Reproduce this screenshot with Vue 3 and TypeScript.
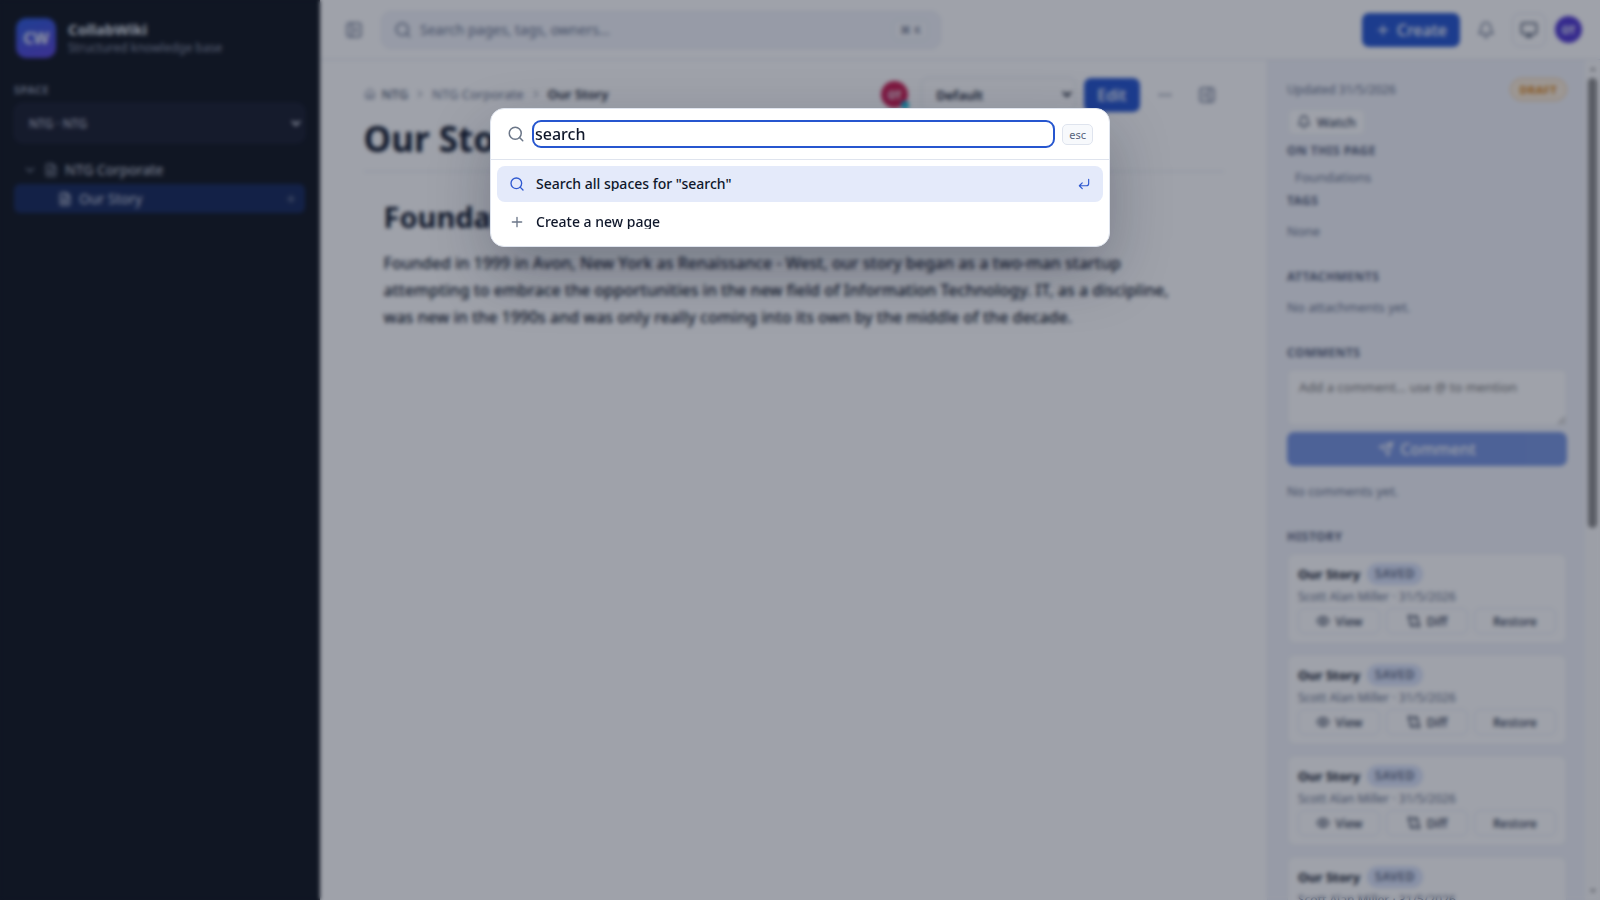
<script setup lang="ts">
import { ref } from 'vue'

const space = ref('ntg')
const view = ref('default')
const comment = ref('')
const query = ref('search')
const history = Array.from({ length: 4 }, (_, i) => ({
  id: i,
  title: 'Our Story',
  meta: 'Scott Alan Miller · 31/5/2026',
}))
</script>

<template>
  <div class="app">
    <nav class="sidebar">
      <div class="brand">
        <div class="logo">CW</div>
        <div>
          <div class="brand-name">CollabWiki</div>
          <div class="brand-sub">Structured knowledge base</div>
        </div>
      </div>
      <label class="space-label" for="space">Space</label>
      <select id="space" v-model="space" class="space-select">
        <option value="ntg">NTG · NTG</option>
      </select>
      <ul class="tree">
        <li class="row">
          <svg class="i14 chevron" viewBox="0 0 24 24"><path d="m6 9 6 6 6-6" /></svg>
          <svg class="i14 file" viewBox="0 0 24 24"><path d="M15 2H6a2 2 0 0 0-2 2v16a2 2 0 0 0 2 2h12a2 2 0 0 0 2-2V7Z M14 2v4a2 2 0 0 0 2 2h4 M10 9H8 M16 13H8 M16 17H8" /></svg>
          <a href="#corporate">NTG Corporate</a>
        </li>
        <li class="row child active">
          <svg class="i14 file" viewBox="0 0 24 24"><path d="M15 2H6a2 2 0 0 0-2 2v16a2 2 0 0 0 2 2h12a2 2 0 0 0 2-2V7Z M14 2v4a2 2 0 0 0 2 2h4 M10 9H8 M16 13H8 M16 17H8" /></svg>
          <a href="#story">Our Story</a>
          <button class="add" aria-label="Add page"><svg class="i12" viewBox="0 0 24 24"><path d="M5 12h14M12 5v14" /></svg></button>
        </li>
      </ul>
    </nav>

    <div class="workspace">
      <header class="topbar">
        <button class="icon-btn" aria-label="Toggle sidebar">
          <svg class="i18" viewBox="0 0 24 24"><rect x="3" y="3" width="18" height="18" rx="2" /><path d="M9 3v18M16 15l-3-3 3-3" /></svg>
        </button>
        <button class="search">
          <svg class="i18" viewBox="0 0 24 24"><circle cx="11" cy="11" r="8" /><path d="m21 21-4.3-4.3" /></svg>
          <span>Search pages, tags, owners...</span>
          <kbd>⌘ K</kbd>
        </button>
        <div class="top-actions">
          <button class="primary create"><svg class="i16" viewBox="0 0 24 24"><path d="M5 12h14M12 5v14" /></svg>Create</button>
          <button class="icon-btn" aria-label="Notifications">
            <svg class="i18" viewBox="0 0 24 24"><path d="M10.27 21a2 2 0 0 0 3.46 0M3.26 15.33A1 1 0 0 0 4 17h16a1 1 0 0 0 .74-1.67C19.41 13.96 18 12.5 18 8A6 6 0 0 0 6 8c0 4.5-1.41 5.96-2.74 7.33" /></svg>
          </button>
          <button class="icon-btn outlined" aria-label="Theme">
            <svg class="i18" viewBox="0 0 24 24"><rect x="2" y="3" width="20" height="14" rx="2" /><path d="M8 21h8M12 17v4" /></svg>
          </button>
          <div class="avatar violet">OT</div>
        </div>
      </header>

      <div class="body">
        <main class="page">
          <div class="page-inner">
            <div class="page-bar">
              <nav class="crumbs" aria-label="Breadcrumb">
                <svg class="i12" viewBox="0 0 24 24"><path d="M15 21v-8a1 1 0 0 0-1-1h-4a1 1 0 0 0-1 1v8 M3 10a2 2 0 0 1 .7-1.5l7-6a2 2 0 0 1 2.6 0l7 6A2 2 0 0 1 21 10v9a2 2 0 0 1-2 2H5a2 2 0 0 1-2-2z" /></svg>
                <a href="#ntg" class="root">NTG</a>
                <svg class="i12 sep" viewBox="0 0 24 24"><path d="m9 18 6-6-6-6" /></svg>
                <a href="#corporate">NTG Corporate</a>
                <svg class="i12 sep" viewBox="0 0 24 24"><path d="m9 18 6-6-6-6" /></svg>
                <strong>Our Story</strong>
              </nav>
              <div class="page-tools">
                <div class="avatar red">OT<i class="dot"></i></div>
                <select v-model="view" class="view-select" aria-label="Page width">
                  <option value="default">Default</option>
                </select>
                <button class="primary edit">Edit</button>
                <button class="icon-btn" aria-label="More"><svg class="i16" viewBox="0 0 24 24"><path d="M5 12h.01M12 12h.01M19 12h.01" stroke-width="4" /></svg></button>
                <button class="icon-btn" aria-label="Toggle details"><svg class="i18" viewBox="0 0 24 24"><rect x="3" y="3" width="18" height="18" rx="2" /><path d="M15 3v18M8 9l3 3-3 3" /></svg></button>
              </div>
            </div>
            <h1>Our Story</h1>
            <article>
              <h2>Foundations</h2>
              <p>Founded in 1999 in Avon, New York as Renaissance - West, our story began as a two-man startup attempting to embrace the opportunities in the new field of Information Technology. IT, as a discipline, was new in the 1990s and was only really coming into its own by the middle of the decade.</p>
            </article>
          </div>
        </main>

        <aside class="details">
          <div class="details-content">
            <div class="updated"><span>Updated 31/5/2026</span><span class="draft">Draft</span></div>
            <button class="watch"><svg class="i14" viewBox="0 0 24 24"><path d="M10.27 21a2 2 0 0 0 3.46 0M3.26 15.33A1 1 0 0 0 4 17h16a1 1 0 0 0 .74-1.67C19.41 13.96 18 12.5 18 8A6 6 0 0 0 6 8c0 4.5-1.41 5.96-2.74 7.33" /></svg>Watch</button>
            <section class="toc">
              <h3>On this page</h3>
              <a href="#foundations">Foundations</a>
            </section>
            <section>
              <h3>Tags</h3>
              <p>None</p>
            </section>
            <section>
              <h3>Attachments</h3>
              <p>No attachments yet.</p>
            </section>
            <section>
              <h3>Comments</h3>
              <textarea v-model="comment" aria-label="Comment" placeholder="Add a comment... use @ to mention"></textarea>
              <button class="primary send" disabled><svg class="i16" viewBox="0 0 24 24"><path d="m22 2-7 20-4-9-9-4ZM22 2 11 13" /></svg>Comment</button>
              <p class="after">No comments yet.</p>
            </section>
            <section>
              <h3>History</h3>
              <div class="cards">
                <div v-for="h in history" :key="h.id" class="card">
                  <div class="card-title"><strong>{{ h.title }}</strong><span class="saved">Saved</span></div>
                  <div class="card-meta">{{ h.meta }}</div>
                  <div class="card-actions">
                    <button><svg class="i14" viewBox="0 0 24 24"><path d="M2 12s3.5-7 10-7 10 7 10 7-3.5 7-10 7S2 12 2 12Z" /><circle cx="12" cy="12" r="3" /></svg>View</button>
                    <button><svg class="i14" viewBox="0 0 24 24"><circle cx="5" cy="5" r="3" /><circle cx="19" cy="19" r="3" /><path d="M12 5h5a2 2 0 0 1 2 2v9M15 8l-3-3 3-3M12 19H7a2 2 0 0 1-2-2V8M9 16l3 3-3 3" /></svg>Diff</button>
                    <button>Restore</button>
                  </div>
                </div>
              </div>
            </section>
          </div>
          <div class="scrollbar" aria-hidden="true">
            <svg viewBox="0 0 10 6"><path d="M1 5 5 1l4 4Z" /></svg>
            <div class="track"><div class="thumb"></div></div>
            <svg viewBox="0 0 10 6"><path d="M1 1l4 4 4-4Z" /></svg>
          </div>
        </aside>
      </div>
    </div>

    <div class="backdrop">
      <div class="palette" role="dialog" aria-label="Command palette">
        <div class="palette-head">
          <svg class="i18" viewBox="0 0 24 24"><circle cx="11" cy="11" r="8" /><path d="m21 21-4.3-4.3" /></svg>
          <input v-model="query" type="text" aria-label="Search" />
          <kbd>esc</kbd>
        </div>
        <div class="results">
          <button class="result selected">
            <svg class="i16" viewBox="0 0 24 24"><circle cx="11" cy="11" r="8" /><path d="m21 21-4.3-4.3" /></svg>
            <span>Search all spaces for "{{ query }}"</span>
            <svg class="i14" viewBox="0 0 24 24"><path d="M20 4v7a4 4 0 0 1-4 4H4M9 10l-5 5 5 5" /></svg>
          </button>
          <button class="result">
            <svg class="i16" viewBox="0 0 24 24"><path d="M5 12h14M12 5v14" /></svg>
            <span>Create a new page</span>
          </button>
        </div>
      </div>
    </div>
  </div>
</template>

<style>
body { overflow: hidden; }
</style>

<style scoped>
.app, .app * { box-sizing: border-box; }
.app {
  display: flex;
  height: 100vh;
  background: #fff;
  color: #0f172a;
  font-family: "Noto Sans", "Open Sans", sans-serif;
  font-size: 14px;
}
button, select, textarea, input, kbd { font-family: inherit; }
button { display: flex; align-items: center; justify-content: center; padding: 0; border: 0; background: none; color: inherit; }
a { color: inherit; text-decoration: none; }
h1, h2, h3, p, ul { margin: 0; padding: 0; }
svg { flex: none; fill: none; stroke: currentColor; stroke-width: 2; stroke-linecap: round; stroke-linejoin: round; }
.i12 { width: 12px; height: 12px; }
.i14 { width: 14px; height: 14px; }
.i16 { width: 16px; height: 16px; }
.i18 { width: 18px; height: 18px; }

.sidebar { flex: none; width: 320px; padding: 18px 15px 18px 14px; background: #11161f; color: #c5cbd8; }
.brand { display: flex; align-items: center; gap: 12px; padding-left: 2px; }
.logo { display: grid; place-items: center; width: 40px; height: 40px; border-radius: 10px; background: linear-gradient(160deg, #2b5ad8, #5b43d6); color: #e8ecf5; font-size: 16px; font-weight: 700; }
.brand-name { color: #e2e8f0; font-size: 15px; font-weight: 700; line-height: 20px; }
.brand-sub { color: #8b93a7; font-size: 12px; line-height: 18px; }
.space-label { display: block; margin: 23px 0 4px; color: #8b93a7; font-size: 11px; font-weight: 700; line-height: 18px; letter-spacing: 0.04em; text-transform: uppercase; }
.space-select { width: 100%; height: 40px; padding: 0 10px; border: 1px solid #20263a; border-radius: 8px; background: #1a1e2e; color: #d5dae6; font-size: 12px; }
.tree { display: flex; flex-direction: column; margin-top: 12px; list-style: none; }
.row { display: flex; align-items: center; gap: 7px; height: 29px; padding: 0 8px 0 9px; border-radius: 6px; color: #d0d5e0; }
.chevron { color: #8b93a7; }
.row .file { color: #9aa2b5; }
.child { padding-left: 44px; }
.active { background: #17295a; }
.row.active .file { color: #e2e6ef; }
.add { margin-left: auto; color: #8b93a7; }

.workspace { display: flex; flex: 1; flex-direction: column; min-width: 0; }
.topbar { display: flex; flex: none; align-items: center; height: 60px; padding: 0 18px 0 17px; border-bottom: 1px solid #e2e6ef; }
.icon-btn { width: 34px; height: 34px; border-radius: 8px; color: #64708a; }
.outlined { border: 1px solid #e2e6ef; color: #3b475e; }
.search { width: 560px; height: 38px; margin-left: 10px; padding: 0 12px; gap: 8px; justify-content: flex-start; border: 1px solid #e7ebf4; border-radius: 10px; background: #f2f4fa; color: #64708a; font-size: 14px; }
kbd { border: 1px solid #dfe4ee; border-radius: 5px; background: #f7f9fc; color: #56617a; }
.search kbd { margin-left: auto; padding: 0 6px; font-size: 11px; line-height: 18px; }
.top-actions { display: flex; align-items: center; gap: 9px; margin-left: auto; }
.primary { height: 34px; gap: 6px; border-radius: 7px; background: #2656cf; color: #fff; font-size: 16px; font-weight: 500; }
.create { padding: 0 13px; }
.avatar { position: relative; display: grid; place-items: center; width: 27px; height: 27px; border-radius: 50%; color: #f1f5f9; font-size: 10px; font-weight: 700; }
.violet { background: #5038d0; }
.red { background: #c91c50; }
.dot { position: absolute; right: -1px; bottom: -1px; width: 8px; height: 8px; border-radius: 50%; background: #17b5d6; }

.body { display: flex; flex: 1; min-height: 0; }
.page { flex: 1; min-width: 0; padding: 17px 20px; }
.page-inner { max-width: 860px; margin: 0 auto; }
.page-bar { display: flex; align-items: center; justify-content: space-between; height: 35px; }
.crumbs { display: flex; align-items: center; gap: 6px; padding-bottom: 2px; color: #64708a; font-size: 13px; }
.crumbs .root { font-weight: 500; color: #4a566e; }
.crumbs .sep { color: #4a566e; }
.crumbs strong { color: #0f172a; font-weight: 600; }
.page-tools { display: flex; align-items: center; gap: 8px; }
.page-tools .red { margin-right: 5px; }
.view-select { width: 155px; height: 35px; padding: 0 10px; border: 1px solid #e2e6ef; border-radius: 8px; background: #fff; color: #0f172a; font-size: 13px; font-weight: 600; }
.edit { padding: 0 13px; }
h1 { height: 60px; border-bottom: 1px solid #e2e6ef; font-size: 35px; line-height: 54px; }
article { padding: 24px 20px; }
h2 { font-size: 29px; line-height: 42px; }
article p { max-width: 800px; margin-top: 12px; font-size: 16px; font-weight: 500; line-height: 27px; }

.details { display: flex; flex: none; width: 333px; overflow: hidden; border-left: 1px solid #e9edf5; background: #f2f4fa; color: #64708a; font-size: 13px; }
.details-content { flex: 1; min-width: 0; padding: 17px 18px 20px 19px; }
.scrollbar { display: flex; flex: none; flex-direction: column; align-items: center; gap: 6px; width: 15px; padding: 6px 0; background: #fbfbfb; }
.scrollbar svg { width: 8px; height: 6px; fill: #7d7d7d; stroke: none; }
.track { flex: 1; width: 9px; }
.thumb { height: 56%; border-radius: 5px; background: #8b8b8b; }
.updated { display: flex; align-items: center; justify-content: space-between; height: 24px; font-size: 12px; }
.draft { padding: 0 9px; border: 1px solid #f0c893; border-radius: 12px; background: #fbeedc; color: #d9800f; font-size: 11px; font-weight: 700; line-height: 21px; letter-spacing: 0.04em; text-transform: uppercase; }
.watch { height: 26px; margin: 8px 0 0 1px; padding: 0 8px; gap: 6px; border: 1px solid #edf0f6; border-radius: 6px; background: #fff; color: #334058; font-size: 13px; font-weight: 500; }
section { margin-top: 28px; }
.toc { margin-top: 7px; }
.toc + section { margin-top: 3px; }
.toc a { display: block; margin-top: 5px; padding: 0 8px; line-height: 24px; }
h3 { color: #56617a; font-size: 12px; font-weight: 700; line-height: 18px; letter-spacing: 0.04em; text-transform: uppercase; }
section p { margin-top: 12px; line-height: 18px; }
textarea { display: block; width: 100%; height: 57px; margin: 7px 0 6px; padding: 8px 11px; border: 1px solid #e6eaf2; border-radius: 6px; background: #fff; font-size: 13px; line-height: 18px; }
textarea::placeholder { color: #757575; }
.send { width: 100%; opacity: 0.6; }
section .after { margin-top: 16px; }
.cards { display: flex; flex-direction: column; gap: 10px; margin-top: 7px; }
.card { padding: 9px 10px; border: 1px solid #e9edf4; border-radius: 8px; background: #fff; }
.card-title { display: flex; align-items: center; gap: 7px; height: 22px; color: #0f172a; font-size: 13px; }
.saved { padding: 0 8px; border-radius: 11px; background: #dbe4fa; color: #56617a; font-size: 12px; font-weight: 600; line-height: 22px; letter-spacing: 0.04em; text-transform: uppercase; }
.card-meta { margin-top: 3px; font-size: 12px; line-height: 18px; }
.card-actions { display: flex; gap: 6px; margin-top: 2px; }
.card-actions button { flex: 1; gap: 6px; height: 26px; border: 1px solid #e6eaf2; border-radius: 6px; color: #27324a; font-size: 12px; font-weight: 500; }

.backdrop { position: fixed; inset: 0; display: flex; align-items: flex-start; justify-content: center; padding-top: 12vh; background: rgba(15, 23, 42, 0.4); backdrop-filter: blur(2px); }
.palette { width: 620px; max-width: 92vw; overflow: hidden; border: 1px solid #dfe4ee; border-radius: 14px; background: #fff; box-shadow: 0 24px 60px rgba(15, 23, 42, 0.28); }
.palette-head { display: flex; align-items: center; gap: 7px; height: 51px; padding: 0 16px; border-bottom: 1px solid #dfe4ee; color: #6b7688; }
input { flex: 1; min-width: 0; height: 28px; padding: 0 1px; border: 2px solid #2656cf; border-radius: 9px; outline: none; background: #fff; color: #0f172a; font-size: 16px; font-weight: 500; }
.palette-head kbd { padding: 0 6px; font-size: 11px; line-height: 19px; }
.results { display: flex; flex-direction: column; gap: 2px; padding: 6px; }
.result { height: 36px; padding: 0 12px; gap: 11px; justify-content: flex-start; border-radius: 8px; font-size: 14px; font-weight: 500; color: #0f172a; }
.result span { flex: 1; overflow: hidden; text-align: left; line-height: 14px; }
.result .i16 { color: #6b7688; }
.result.selected { background: #e4eafa; }
.result.selected svg { color: #2f59d0; }
</style>
